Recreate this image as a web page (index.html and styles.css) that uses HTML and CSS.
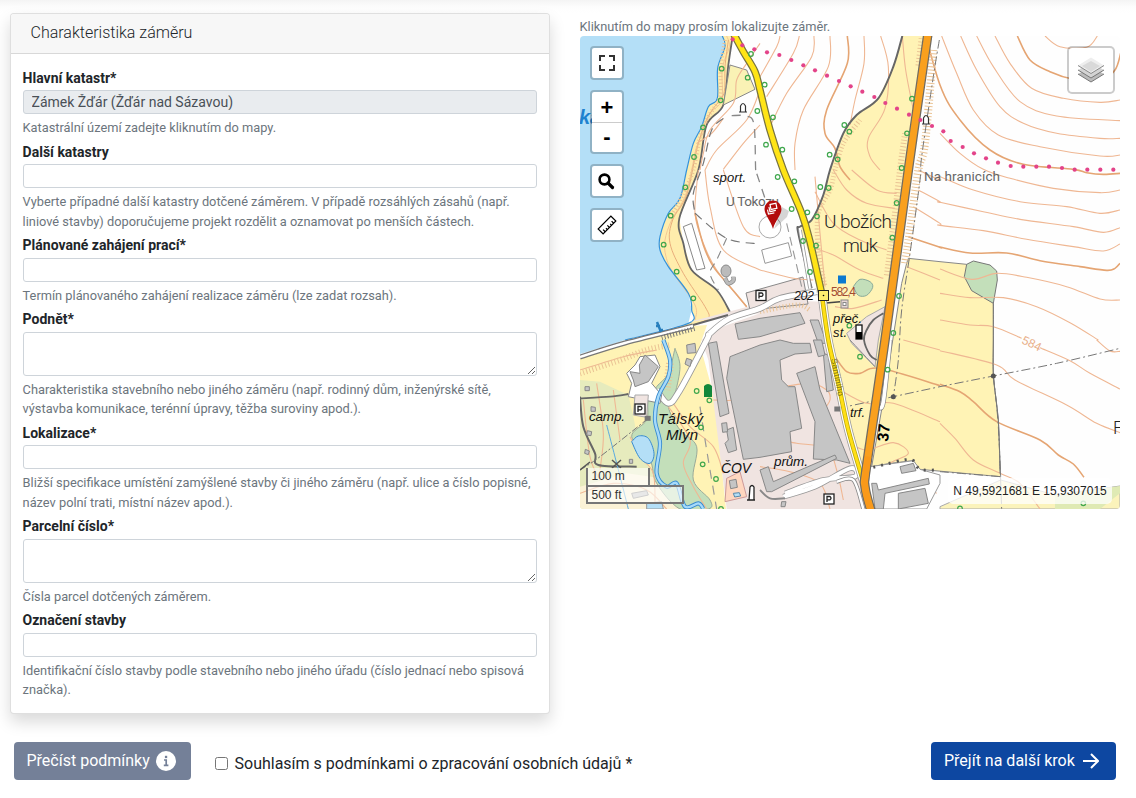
FILE: index.html
```html
<!DOCTYPE html>
<html lang="cs">
<head>
<meta charset="utf-8">
<title>Charakteristika záměru</title>
<link rel="stylesheet" href="styles.css">
</head>
<body>
<div class="prev-card"></div>
<main class="columns">
  <section class="card">
    <h2 class="card-header">Charakteristika záměru</h2>
    <form class="card-body">
      <div class="field"><label class="label">Hlavní katastr*</label><input class="control" disabled value="Zámek Žďár (Žďár nad Sázavou)"><small class="help">Katastrální území zadejte kliknutím do mapy.</small></div>
      <div class="field"><label class="label">Další katastry</label><input class="control"><small class="help">Vyberte případné další katastry dotčené záměrem. V případě rozsáhlých zásahů (např. liniové stavby) doporučujeme projekt rozdělit a oznamovat po menších částech.</small></div>
      <div class="field"><label class="label">Plánované zahájení prací*</label><input class="control"><small class="help">Termín plánovaného zahájení realizace záměru (lze zadat rozsah).</small></div>
      <div class="field"><label class="label">Podnět*</label><textarea class="control area"></textarea><small class="help">Charakteristika stavebního nebo jiného záměru (např. rodinný dům, inženýrské sítě, výstavba komunikace, terénní úpravy, těžba suroviny apod.).</small></div>
      <div class="field"><label class="label">Lokalizace*</label><input class="control"><small class="help">Bližší specifikace umístění zamýšlené stavby či jiného záměru (např. ulice a číslo popisné, název polní trati, místní název apod.).</small></div>
      <div class="field"><label class="label">Parcelní číslo*</label><textarea class="control area"></textarea><small class="help">Čísla parcel dotčených záměrem.</small></div>
      <div class="field"><label class="label">Označení stavby</label><input class="control"><small class="help">Identifikační číslo stavby podle stavebního nebo jiného úřadu (číslo jednací nebo spisová značka).</small></div>
    </form>
  </section>
  <section class="map-col">
    <small class="map-hint">Kliknutím do mapy prosím lokalizujte záměr.</small>
    <div class="map">
      <svg class="map-svg" viewBox="580 36 540 473" width="540" height="473">
        <g id="terrain"></g>
        <g class="place">
          <text x="824" y="228" font-size="19" textLength="68">U božích</text>
          <text x="843" y="252" font-size="19" textLength="35">muk</text>
          <text x="726" y="206" font-size="13.5" textLength="53" class="soft">U Tokozu</text>
          <text x="924" y="181" font-size="13.5" textLength="76" class="soft">Na hranicích</text>
          <text x="1113" y="434" font-size="18">F</text>
        </g>
        <g class="ital">
          <text x="713" y="182" font-size="13" textLength="33">sport.</text>
          <text x="794" y="300" font-size="12.5" textLength="20">202</text>
          <text x="833" y="322.500" font-size="13" textLength="29">přeč.</text>
          <text x="833" y="336.500" font-size="13" textLength="14">st.</text>
          <text x="850" y="417" textLength="15" font-size="13">trf.</text>
          <text x="774" y="466" font-size="13.500" textLength="34">prům.</text>
          <text x="589" y="421" font-size="13.500" textLength="36">camp.</text>
          <text x="658" y="423.500" font-size="15" textLength="45">Tálský</text>
          <text x="666" y="439.500" font-size="15" textLength="32">Mlýn</text>
          <text x="721" y="473" font-size="14" textLength="30">ČOV</text>
        </g>
        <text class="water-name" x="579" y="124">ka</text>
        <text class="height" x="831" y="296" textLength="25">582,4</text>
        <text class="contour-no" transform="translate(1021 343) rotate(25)">584</text>
        <text class="road-no" transform="translate(888 442) rotate(-84)">37</text>
        <text class="street" transform="translate(831 359) rotate(79)" textLength="38">Santiniho</text>
        <g id="pins"></g>
        <g class="marker">
          <path d="M774 229 L787 217 L789 211 L782 207Z" fill="#000" opacity=".16"/>
          <path d="M773 229 C771 221 764.500 215 764.500 209 A8.500 8.500 0 0 1 781.500 209 C781.500 215 775 221 773 229Z" fill="#b30c0c"/>
          <g transform="rotate(-12 773 209)" fill="none" stroke="#fff" stroke-width="1.200"><rect x="771" y="204" width="6" height="5"/><path d="M769.500 206V211H775.500M767.500 208.500V213H773.500"/></g>
        </g>
      </svg>
      <div class="controls">
        <a class="tool"><svg width="20" height="20" viewBox="0 0 20 20"><path d="M3 8V3H8M12 3H17V8M17 12V17H12M8 17H3V12" fill="none" stroke="#333" stroke-width="2"/></svg></a>
        <div class="tool zoom"><a class="zoom-btn">+</a><a class="zoom-btn minus">-</a></div>
        <a class="tool"><svg class="glass" width="18" height="18" viewBox="0 0 18 18"><circle cx="7.500" cy="7.500" r="4.900" fill="none" stroke="#000" stroke-width="2.600"/><path d="M11 11L15.500 15.500" stroke="#000" stroke-width="3.200" stroke-linecap="round"/></svg></a>
        <a class="tool"><svg width="20" height="20" viewBox="0 0 20 20"><g transform="rotate(-45 10 10)" fill="none" stroke="#000" stroke-width="1.200"><rect x="1" y="6.500" width="18" height="7"/><path d="M4 13.500V10.500M7 13.500V11.500M10 13.500V10.500M13 13.500V11.500M16 13.500V10.500"/></g></svg></a>
      </div>
      <a class="layers"><svg width="26" height="26" viewBox="0 0 26 26"><path d="M0 17L13 10L26 17L13 25Z" fill="#bbb"/><path d="M0 17L13 25L26 17" fill="none" stroke="#777"/><path d="M0 13L13 6L26 13L13 21Z" fill="#d3d3d3"/><path d="M0 13L13 21L26 13" fill="none" stroke="#777"/><path d="M0 8.500L13 .5L26 8.500L13 16.500Z" fill="#eee"/><path d="M4 9L13 4L22 9L13 15Z" fill="#d9d9d9"/><path d="M0 8.500L13 16.500L26 8.500" fill="none" stroke="#888"/></svg></a>
      <div class="scale"><div class="scale-m">100 m</div><div class="scale-ft">500 ft</div></div>
      <div class="coords">N 49,5921681 E 15,9307015</div>
    </div>
  </section>
</main>
<footer class="actions">
  <button class="btn btn-grey">Přečíst podmínky <svg width="20" height="20" viewBox="0 0 20 20"><circle cx="10" cy="10" r="10" fill="#fff"/><rect x="8.900" y="4.800" width="2.300" height="2.300" fill="#748098"/><path d="M8 9H10.200V14.300M7.800 14.300H12.400" fill="none" stroke="#748098" stroke-width="1.700"/></svg></button>
  <label class="agree"><input class="check" type="checkbox"><span class="agree-text">Souhlasím s podmínkami o zpracování osobních údajů *</span></label>
  <button class="btn btn-blue">Přejít na další krok <svg width="16" height="16" viewBox="0 0 16 16"><path d="M0 8H15M8 1L15 8L8 15" fill="none" stroke="#fff" stroke-width="2"/></svg></button>
</footer>
<script src="map.js"></script>
</body>
</html>
```
FILE: styles.css
```css
* { box-sizing: border-box; }
body { margin: 0; height: 798px; overflow: hidden; background: #fff; color: #212529; font: 16px/1.5 Roboto, sans-serif; }
.prev-card { height: 13px; background: linear-gradient(#f4f4f4, #fdfdfd 7px, #fff); }
.columns { display: flex; gap: 29.500px; padding: 0 16px 0 10px; height: 701px; align-items: flex-start; }
.card { width: 540px; height: 701px; border: 1px solid rgba(0,0,0,.125); border-radius: 4px; background: #fff; box-shadow: 0 8px 16px rgba(0,0,0,.15); }
.card-header { margin: 0; height: 40px; padding: 0 19.500px; font-size: 16px; font-weight: 300; line-height: 38px; background: #f7f7f7; border-bottom: 1px solid rgba(0,0,0,.125); border-radius: 3px 3px 0 0; }
.card-body { padding: 13.700px 12px 0 11.600px; }
.field { display: flex; flex-direction: column; margin-bottom: 4.400px; }
.label { font-size: 14px; font-weight: 700; line-height: 21px; margin-bottom: 1.600px; }
.control { display: block; width: 100%; height: 24px; padding: 0 8px; border: 1px solid #ced4da; border-radius: 3px; background: #fff; color: #495057; font: 14px/21px Roboto, sans-serif; }
.control:disabled { background: #e9ecef; }
.area { height: 44px; resize: vertical; }
.help { margin-top: 4px; font-size: 12.800px; line-height: 19.200px; color: #6c757d; }
.map-col { width: 540.500px; padding-top: 4px; }
.map-hint { display: block; font-size: 12.800px; line-height: 19px; color: #6c757d; }
.map { position: relative; width: 540px; height: 473px; margin-left: .5px; overflow: hidden; border-radius: 4px; font-family: "Liberation Sans", Arial, sans-serif; }
.map-svg { display: block; }
.controls { position: absolute; left: 10px; top: 10px; display: flex; flex-direction: column; gap: 10px; }
.tool { display: flex; align-items: center; justify-content: center; width: 34px; height: 34px; background: #fff; background-clip: padding-box; border: 2px solid rgba(0,0,0,.2); border-radius: 4px; }
.glass { margin-right: 2px; }
.zoom { flex-direction: column; height: 64px; }
.zoom-btn { width: 30px; height: 30px; font: bold 22px/31px "Liberation Sans", sans-serif; text-align: center; color: #000; }
.minus { line-height: 27px; border-top: 1px solid #ccc; }
.layers { position: absolute; right: 5px; top: 10px; width: 48px; height: 48px; display: flex; align-items: center; justify-content: center; background: #fff; background-clip: padding-box; border: 2px solid rgba(0,0,0,.2); border-radius: 5px; }
.scale { position: absolute; left: 5.500px; bottom: 5px; font-size: 12px; line-height: 14px; color: #333; }
.scale-m, .scale-ft { border: 2px solid #777; border-top: 0; background: rgba(255,255,255,.6); padding: 1px 4px 0; height: 19px; width: 64px; }
.scale-ft { border-top: 2px solid #777; border-bottom: 2px solid #777; margin-top: -2px; width: 98px; height: 19px; }
.coords { position: absolute; right: 8px; bottom: 5px; width: 164px; height: 26px; border-radius: 5px; background: rgba(255,255,255,.75); font-size: 12px; line-height: 26px; text-align: center; color: #222; white-space: nowrap; }
.actions { display: flex; align-items: flex-start; padding: 28px 20px 0 14px; }
.btn { display: flex; align-items: center; height: 38px; border: 0; border-radius: 4px; padding: 0 12.500px; gap: 6px; color: #fff; font: 16px/24px Roboto, sans-serif; white-space: nowrap; }
.btn-grey { width: 177px; background: #748098; }
.btn-blue { width: 185px; margin-left: auto; background: #0d47a1; gap: 8px; padding-left: 13px; }
.agree { display: flex; align-items: center; margin: 9px 0 0 24px; }
.agree-text { padding-top: 1px; margin-bottom: -1px; }
.check { width: 13px; height: 13px; margin: 0 6.500px 0 0; }

.place { font-family: Roboto, sans-serif; font-weight: 300; fill: #222; }
.soft { font-weight: 400; fill: #666; }
.ital { font: italic 14px "Liberation Sans", sans-serif; fill: #111; }
.water-name { font: italic bold 20px "Liberation Sans", sans-serif; fill: #1f82cf; }
.height { font: 12px "Liberation Sans", sans-serif; fill: #a24b32; }
.contour-no { font: 12px "Liberation Sans", sans-serif; fill: #e8ae88; }
.road-no { font: bold 16px "Liberation Sans", sans-serif; fill: #000; }
.street { font: 8.500px "Liberation Sans", sans-serif; fill: #777018; }
```
FILE: map.js
```js
const NS = "http://www.w3.org/2000/svg";
const terrain = document.getElementById("terrain");
const pins = document.getElementById("pins");

// Map sheets: origin of each one; positions inside a sheet are in thirds of a pixel.
const sheets = { A:[580,10], B:[760,10], C:[940,10], D:[580,170], E:[760,170], F:[940,170], G:[580,340], H:[760,340], I:[940,340] };

// "A 427,78 435,110 D 300,85" -> absolute points
function pts(text) {
  let o = [0, 0], k = 1;
  const out = [];
  for (const t of text.trim().split(/\s+/)) {
    if (sheets[t]) { o = sheets[t]; k = 1 / 3; }
    else if (t === "P") { o = [0, 0]; k = 1; }
    else { const [x, y] = t.split(",").map(Number); out.push([o[0] + x * k, o[1] + y * k]); }
  }
  return out;
}
function add(tag, attrs, parent = terrain) {
  const e = document.createElementNS(NS, tag);
  for (const a in attrs) e.setAttribute(a, attrs[a]);
  parent.appendChild(e);
}
function curve(p) {
  let d = `M${p[0]}`;
  for (let i = 0; i < p.length - 1; i++) {
    const a = p[i - 1] || p[i], b = p[i], c = p[i + 1], e = p[i + 2] || c;
    d += `C${b[0] + (c[0] - a[0]) / 6},${b[1] + (c[1] - a[1]) / 6} ${c[0] - (e[0] - b[0]) / 6},${c[1] - (e[1] - b[1]) / 6} ${c[0]},${c[1]}`;
  }
  return d;
}
const area = (t, fill, stroke = "none", w = 1) => add("path", { d: "M" + pts(t).join("L") + "Z", fill, stroke, "stroke-width": w });
const line = (t, stroke, w = 1, dash = "") => add("path", { d: curve(pts(t)), fill: "none", stroke, "stroke-width": w, "stroke-dasharray": dash });
const blob = (t, fill, stroke) => add("path", { d: curve(pts(t)), fill, stroke });

const FIELD = "#fff3b5", WATER = "#b4dff7", WOOD = "#c3dfba", PINK = "#f0e4e1", HOUSE = "#c5c5c5", EDGE = "#888", DARK = "#666";
const CONT = "#efb793", BOLD = "#e5a573";

area("P 580,36 1120,36 1120,509 580,509", "#fefefe");

// lake and its shore
const shore = "A 427,78 435,110 413,175 412,265 385,290 365,350 340,400 320,480 D 300,85 265,130 240,200 240,240 265,290 325,370 335,420 325,460 135,510";
const bank = "A 458,78 445,165 430,285 380,345 355,480 D 298,145 310,220 335,300 410,360 452,430";
area(shore + " P 580,354 580,36", WATER);
add("path", { d: curve(pts(shore)) + "L693,325 731,313" + "L" + pts(bank).reverse().join("L") + "Z", fill: "#ffedac" });
line("A 440,78 448,110 427,175 425,270 390,310 375,355 350,410 335,480 D 315,80 275,150 255,210 258,260 280,310 345,405 345,450", "#f2c795");
line("A 445,90 435,170 432,250 400,295 375,340 350,420 D 320,75 278,150 270,220 310,310 375,410 385,445 340,465", "#e8ad7b");
line(shore, "#3292dc", 1.2);
line(bank, DARK, 1.8);
area("A 450,165 500,180 525,238 430,285", "#faf2b5", EDGE);

// fields
area("B 427,78 400,170 355,265 290,315 250,370 210,480 E 190,75 155,150 120,170 185,370 H 205,0 265,270 310,400 320,375 375,0 E 445,0 B 503,78", FIELD);
area("E 445,265 F 0,275 80,283 160,400 I 160,0 160,108 175,240 182,410 H 480,388 460,362 390,370 335,380 370,180 E 425,340 440,280", FIELD, EDGE);
area("I 0,500 182,420 345,465 540,438 540,507 0,507", "#fbf3bb", "#aaa");
area("I 345,465 540,438 540,460 480,507 345,507", "#dfeab4");
area("P 580,355 693,326 707,325 700,345 715,400 726,509 580,509", FIELD);
area("G 0,120 60,125 145,165 160,230 170,280 150,300 220,400 230,507 0,507", "#e6ebbd");
area("G 140,400 350,430 330,507 0,507 0,440", "#fbf2d6");
blob("G 285,25 300,80 285,160 265,200 300,270 350,320 340,420 390,480 385,507 300,507 230,430 210,360 155,290 200,240 205,180 230,140 265,100 285,25", WOOD, "#9a9");
area("F 80,283 100,273 150,285 170,303 172,330 160,400 95,362 73,320", WOOD, "#777");
blob("E 280,350 300,328 330,335 338,352 320,376 295,376 280,350", WOOD, "#8a9");
area("E 320,440 375,410 355,510 H 345,80 275,10 260,-20", PINK, "#aaa");

// industrial zone
area("E -210,455 40,390 190,395 H 190,0 310,440 320,507 -100,507 G 440,507 385,60 365,0 400,-30 540,-80", PINK);
area("P 746,293 803,277 808,304 750,310", PINK, EDGE);

// contours
for (const t of [
  "A 540,100 500,160 470,210 460,280 390,360 370,430 360,480",
  "A 540,240 500,330 410,420 375,480", "A 540,345 490,400 430,478",
  "A 350,400 395,370 430,325",
  "B 60,78 50,110 0,200", "B 118,78 100,130 20,260", "B 162,78 155,140 80,250 30,350", "B 210,78 205,170 130,300 105,400 105,480",
  "B 312,78 312,160 285,270 270,345", "B 362,78 385,170 375,295 325,385 330,440 360,480", "B 427,78 437,180 460,300",
  "C 5,78 50,190 100,300 175,375 300,410 480,438 540,435", "C 62,78 110,180 180,290 250,340 350,370 480,385 540,385",
  "C 110,78 160,170 240,275 350,318 540,332", "C 165,78 210,160 275,235 370,265 480,277 540,270", "C 315,78 360,110 440,112 472,78",
  "C 0,370 60,430 130,478 F 210,25 340,55 480,68 540,60",
  "E 475,0 540,30 F 0,20 100,60 240,95 380,110 480,130 540,120",
  "E 475,60 540,95 F 0,97 130,125 240,148 400,170 490,187 540,173",
  "E 460,110 540,160 F 0,166 130,182 260,208 400,230 490,243 540,222",
  "E 440,290 540,330", "F 0,297 95,328 170,310 260,322 380,350 480,387 540,390",
  "F 0,370 90,383 190,383 290,410 390,458 475,510", "F 0,450 90,465 160,470 245,505",
  "I 300,23 390,62 450,100 540,147", "I 470,0 510,33 540,34",
  "I 0,32 170,75 225,120 380,195 470,250 540,278", "I 0,250 45,295 100,360 180,400 240,430 300,507",
  "D 430,0 490,170 540,200", "D 375,0 390,110 430,240 540,300", "D 355,0 345,130 370,220 410,300 500,410",
  "E 0,300 100,325 160,330", "E 220,0 260,60 320,100 405,115", "E 275,0 350,60 410,70", "E 165,65 220,160 300,210 380,240", "E 165,235 220,255 300,300 370,325",
  "E 165,20 180,190 195,350", "E 225,410 280,415 365,390",
  "H 0,155 140,130 200,150 210,180 190,220 210,270 240,320", "H 15,250 80,300 110,310 200,325 230,390 250,480",
  "H 0,380 90,395 180,430 210,507", "H 240,150 320,190 400,190 540,245", "H 430,0 540,30", "H 270,310 320,330 400,308 445,340 390,370 380,400 450,420 530,460",
  "G 0,90 130,50 230,30", "G 400,180 470,180 540,160", "G 280,190 330,260 400,320 430,400",
  "G 150,290 180,350 220,400 225,507", "G 50,130 70,280 60,390", "G 100,150 120,300", "G 10,180 30,350 60,420", "G 0,460 100,430 200,450 260,507",
  "G 265,200 330,300 310,370 340,440 380,507"
]) line(t, CONT, 1.1);
for (const t of [
  "B 262,78 262,160 200,300 195,370 225,415 240,470 270,510",
  "C 232,78 270,150 330,185 400,208 480,215 525,180 542,130",
  "C -60,10 0,225 60,330 150,420 250,463 400,478 F 440,8 490,13 540,10",
  "E 445,200 540,232 F 0,231 90,249 200,249 300,272 420,290 500,301 525,295 540,280",
  "D 345,130 370,225 400,290 450,350 500,410",
  "H 225,50 260,95 300,100 360,85 540,137", "I 0,133 60,155 100,185 170,245 300,300 355,345 400,372 432,412"
]) line(t, BOLD, 1.6);

// hatched embankments
const hatch = (t, w = 6) => { line(t, "#eac394", w, "1 2.3"); };
hatch("B 485,85 475,170"); hatch("B 520,120 495,400 475,480 E 450,180 435,280", 8);
hatch("B 300,330 250,400 225,480 E 210,60 175,130 175,240 195,350", 5);
hatch("B 435,370 420,480 E 405,130 380,320", 6);
hatch("G 0,100 120,60 200,30 270,15", 6); hatch("G 270,70 260,150", 8);
hatch("A 435,90 422,175 420,260 385,320 360,380 340,480 D 310,70 270,145", 4);
hatch("E 0,425 110,405 150,420", 5);

// lakeside road and mill roads
line("P 580,357 625,343 693,326", "#777", 5);
line("P 580,357 625,343 693,326", "#fff", 2.4);
line("P 693,325 728,315", "#666", 2);
line("D 245,503 345,475", "#777", 5, "1 2");
const road = (t, w, fill = "#fff", edge = "#999") => { line(t, edge, w + 1.6); line(t, fill, w); };
road("G 230,150 265,190 300,150 380,0 D 390,490 450,445 540,415 E 60,385 170,365", 5);
area("G 165,75 180,50 225,45 240,80 215,130 245,165 240,190 145,170 155,130 140,100", "#fff", EDGE);
area("G 150,95 180,100 178,75 195,45 235,80 205,125 165,140 160,120", HOUSE, EDGE);
line("G 0,175 90,170 145,162", DARK, 1.8);
line("G 0,170 10,260 45,340 55,375 170,380", DARK, 2);
line("G 0,390 60,350 205,235", "#777", 1, "7 2 2 2");
line("G 80,255 110,370 145,507", "#5aaae0", 1);
const stream = "G 250,0 270,60 265,110 235,170 225,240 240,310 230,400 260,440 290,430 315,500 355,490 370,507";
line(stream, "#388bd0", 4.2); line(stream, "#a6dafa", 2.4);
blob("G 155,305 175,288 205,295 222,340 210,370 180,355 155,305", WATER, "#388bd0");
area("G 200,490 245,485 250,507 200,507", WATER, "#999");
area("G 165,165 205,165 200,232 160,225", PINK, "#aaa");

// buildings
for (const t of [
  "G 450,50 540,15 H 60,0 100,10 150,10 155,38 105,42 60,60 65,120 85,140 105,140 125,265 90,275 95,335 0,352 G 490,358 440,115",
  "G 385,10 410,5 447,220 420,230", "G 440,270 460,262 470,330 445,338 435,310 445,300", "G 425,250 440,248 443,275 428,277",
  "D 465,462 540,445 E 120,428 135,460 0,500 D 475,508",
  "H 110,100 165,80 180,150 270,370 230,360 160,357 165,245", "H 0,390 25,380 40,425 225,345 230,355 35,455 20,455",
  "E 150,450 175,450 200,520 175,520", "H 190,40 205,45 220,150 200,155", "H 160,0 185,0 195,45 175,50",
  "G 320,15 345,10 348,38 322,40", "G 320,55 335,60 330,80 315,72", "G 148,358 158,358 158,370 148,370",
  "G 15,140 28,140 28,152 15,152", "G 33,200 46,202 46,214 33,214", "G 22,272 35,275 33,287 20,285", "G 16,328 28,333 25,344 14,340",
  "H 65,485 78,485 75,500 63,500", "G 155,460 200,452 205,465 160,475"
]) area(t, HOUSE, EDGE, 1);
area("G 440,415 480,395 500,470 435,485", "#ffd7bf", "#c99"); area("G 448,422 468,418 472,442 452,446", HOUSE, EDGE);
area("G 460,460 478,458 482,468 464,471", WATER, "#58a");
area("D 310,170 335,160 375,295 350,300", "#fff", "#888"); area("E 5,240 85,218 95,258 15,280", "#fff", "#999");
add("circle", { cx: 770, cy: 227, r: 11, fill: "#fff", stroke: "#aaa" });
add("ellipse", { cx: 726, cy: 271, rx: 5, ry: 6, fill: "#bbb", stroke: "#888" });
line("D 435,325 445,340 460,332 460,320", "#888", 4.5); line("D 435,325 445,340 460,332 460,320", "#bbb", 3);
road("H 70,470 165,440 270,385 285,410 190,420 75,460", 4);
area("H 325,440 330,380 460,362 480,388 540,405 540,430 500,507 340,507", "#fff", "#999");
for (const t of ["H 335,430 350,430 355,450 505,415 508,432 375,460 370,507 345,507", "H 415,460 495,445 505,490 415,507", "H 420,380 460,370 468,392 425,400"]) area(t, HOUSE, EDGE);
line("H 0,450 30,475 75,475", "#888", 2); line("H 230,425 280,420 310,507", "#888", 4); line("H 230,425 280,420 310,507", "#fff", 2.5);
line("H 340,382 380,372 430,360 460,362 480,388 530,390", "#555", 3, "2 6");
line("H 345,80 270,0", "#888", 1);
line("E 370,430 340,450 320,480 H 312,0 330,45 350,60", "#666", 1.8);
line("B 427,78 400,170 355,265 290,315 250,370 210,480 E 190,75 155,150 120,170 115,190 155,355", DARK, 2);
road("E 120,180 150,355", 2);
line("E 190,400 240,395", "#444", 1.5);

// paths, power lines
line("D 345,130 440,205 540,222", "#777", 1.2, "9 6");
line("A 430,325 395,360 370,460 D 340,70 345,130", "#777", 1.2, "9 6");
line("A 455,317 500,318 522,345 527,480 D 530,10 560,100", "#888", 1.3, "9 7");
line("D 440,205 410,270 390,310 415,360", "#888", 1.1, "8 6"); line("E 80,160 125,350", "#999", 1.1, "9 5");
line("G 360,200 380,330 410,507", "#999", 1.2, "9 7");
line("B 538,90 520,200 485,440 E 480,30 450,250 425,420 H 415,60 400,170", "#777", 1, "9 3 2 3");
line("H 235,205 400,170 I 0,140 160,108 350,70 540,25", "#777", 1, "9 3 2 3");
line("I 160,108 175,260 185,507", "#777", 1, "9 3 2 3"); line("I 0,395 182,410", "#777", 1, "9 3 2 3");
line("F 160,400 I 160,0 160,108 175,240 180,400", "#777", 1);

// main roads
const upper = "A 460,70 490,125 525,185 B 0,240 30,360 70,480 E 125,130 150,215 185,370";
const lower = "E 185,370 H 205,0 235,130 265,270 310,425";
line(lower, "#999", 8.5); line(lower, "#fff", 7); line(lower, "#b8a50a", 4.5);
line(upper, "#77733f", 7.5); line(upper, "#ffe416", 5);
line(lower, "#ffdf15", 3);
line("H 390,0 370,185 355,200", "#888", 5); line("H 390,0 370,185 355,200", "#fff", 3.6);
line("B 504,70 445,480 E 375,510 H 320,375 315,440 335,520", "#716b61", 9.5);
line("B 504,70 445,480 E 375,510 H 320,375 315,440 335,520", "#f9a01e", 7);
line("H 325,350 315,440 335,520", "#f9991a", 6);

// municipal boundary
for (const [x, y] of pts("A 458,88 487,106 523,118 B 21,127 58,135 94,150 130,166 165,181 201,197 237,213 272,229 307,245 343,261 376,279 411,296 447,314 481,330 516,348 C 10,364 32,393 68,411 102,430 138,445 174,458 212,468 250,470 289,470 327,470 366,474 404,479 442,479 481,479 520,479"))
  add("circle", { cx: x, cy: y, r: 2.1, fill: "#e34389" });
// solitary trees
for (const [x, y] of pts("A 425,176 422,271 369,352 342,441 513,132 503,203 532,303 B 14,224 39,322 18,404 67,419 253,345 268,365 209,434 233,448 456,266 441,370 425,474 D 316,52 272,137 251,224 290,305 340,385 E 53,21 103,34 181,51 206,54 95,117 142,127 171,139 129,213 168,227 150,306 410,99 397,203 417,378 400,489 268,467 G 350,153 388,181 363,262 368,373 408,417 H 300,50 383,89 G 423,507 I 60,505 430,490"))
  add("circle", { cx: x, cy: y, r: 2.3, fill: "none", stroke: "#3fa74d", "stroke-width": 1.2 });

// point symbols
for (const [x, y] of pts("P 743,108 926,120"))
  add("path", { d: `M${x - 4} ${y + 4}H${x + 4}M${x - 2.5} ${y + 4}V${y - 2}Q${x} ${y - 7} ${x + 2.5} ${y - 2}V${y + 4}`, fill: "#fff", stroke: "#333", "stroke-width": 1.2 });
for (const [x, y] of pts("P 761,295.5 640,409 829,499")) {
  add("rect", { x: x - 5, y: y - 5, width: 10, height: 10, fill: "#fff", stroke: "#222", "stroke-width": 1.3 }, pins);
  add("path", { d: `M${x - 2} ${y + 3}V${y - 2.5}H${x + 1}Q${x + 3} ${y - .8} ${x + 1} ${y + .8}H${x - 2}`, fill: "none", stroke: "#222", "stroke-width": 1.3 }, pins);
}
add("rect", { x: 838, y: 275.5, width: 8, height: 8, fill: "#0b79d0" }, pins);
add("rect", { x: 818.5, y: 290.5, width: 10, height: 10, fill: "#ffee70", stroke: "#222" }, pins);
add("circle", { cx: 823.5, cy: 295.5, r: .8 }, pins);
add("rect", { x: 841, y: 300, width: 7, height: 8, fill: "#e9d7d5", stroke: "#888" }, pins);
add("rect", { x: 843, y: 302.5, width: 3, height: 3, fill: "#fff", stroke: "#888" }, pins);
add("rect", { x: 856, y: 325, width: 6, height: 14, fill: "#fff", stroke: "#111", "stroke-width": 1.3 }, pins);
add("rect", { x: 856, y: 332, width: 6, height: 7 }, pins);
add("path", { d: "M704 397V386Q708 382 712 386V397Z", fill: "#12883b" }, pins);
add("path", { d: "M747 500H755M749 500L750 487Q752 484 754 487L754 500", fill: "#fff", stroke: "#222", "stroke-width": 1.3 }, pins);
for (const [x, y] of pts("H 400,170 I 160,108")) add("circle", { cx: x, cy: y, r: 2.5, fill: "#555" }, pins);
for (const [x, y] of pts("H 232,207 G 203,235")) add("rect", { x: x - 3, y: y - 2.5, width: 6, height: 5, fill: "#777" }, pins);
add("path", { d: "M657 322L661 332M656 326H660M659 330H663", stroke: "#287fbd", "stroke-width": 2.5 }, pins);
add("path", { d: "M612 460L621 468M621 460L612 468M580 470L590 462", stroke: "#555", "stroke-width": 1.5 }, pins);
```
